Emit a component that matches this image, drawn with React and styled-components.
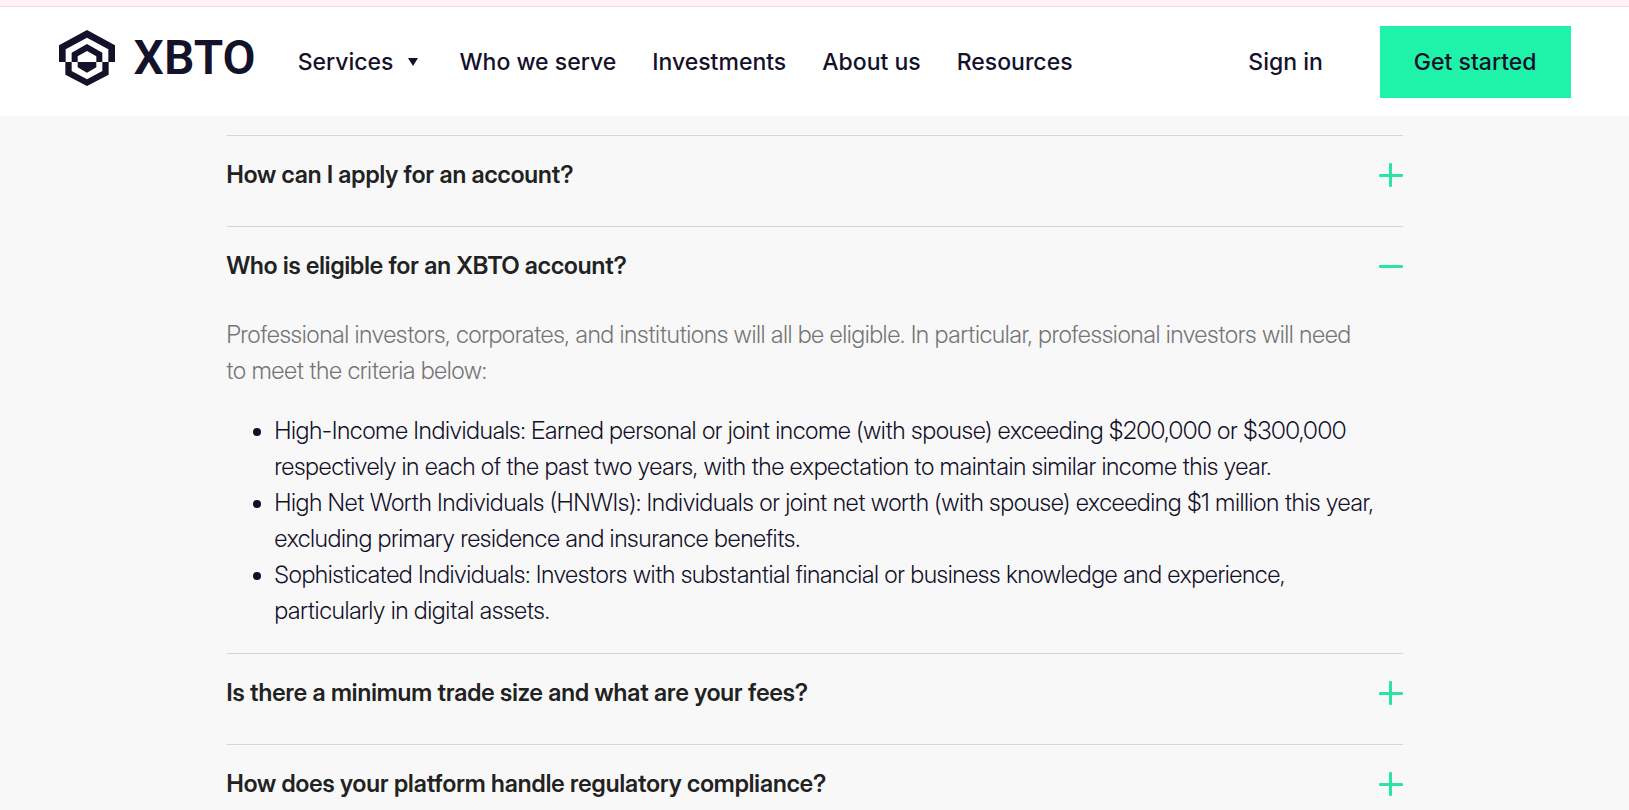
import React, { useState } from 'react';
import styled, { createGlobalStyle } from 'styled-components';

const faqs = [
    {
        id: 'apply',
        question: 'How can I apply for an account?',
    },
    {
        id: 'eligible',
        question: 'Who is eligible for an XBTO account?',
        intro: 'Professional investors, corporates, and institutions will all be eligible. In particular, professional investors will need to meet the criteria below:',
        points: [
            'High-Income Individuals: Earned personal or joint income (with spouse) exceeding $200,000 or $300,000 respectively in each of the past two years, with the expectation to maintain similar income this year.',
            'High Net Worth Individuals (HNWIs): Individuals or joint net worth (with spouse) exceeding $1 million this year, excluding primary residence and insurance benefits.',
            'Sophisticated Individuals: Investors with substantial financial or business knowledge and experience, particularly in digital assets.',
        ],
    },
    {
        id: 'fees',
        question: 'Is there a minimum trade size and what are your fees?',
    },
    {
        id: 'compliance',
        question: 'How does your platform handle regulatory compliance?',
    },
];

function Logo() {
    return (
        <LogoLink href="#home">
            <svg width="56" height="56" viewBox="0 0 168 168" fill="currentColor" aria-hidden="true">
                <path d="M0 46 84 0l84 46v50h-20V58L84 23 20 58v38H0z" />
                <path d="M38 68 84 42l46 26v28h-18V79L84 63 56 79v17H38z" />
                <path d="M19 96h19v27l46 25 46-25V96h19v38l-65 34-65-34z" />
                <path d="M56 96h56v16l-28 16-28-16z" />
            </svg>
            <LogoText>XBTO</LogoText>
        </LogoLink>
    );
}

function Header() {
    return (
        <HeaderBar>
            <HeaderInner>
                <Logo />
                <Nav>
                    <NavButton type="button">
                        Services
                        <svg width="10" height="8" viewBox="0 0 10 8" fill="currentColor" aria-hidden="true">
                            <path d="M0 0h10L5 8z" />
                        </svg>
                    </NavButton>
                    <NavLink href="#who-we-serve">Who we serve</NavLink>
                    <NavLink href="#investments">Investments</NavLink>
                    <NavLink href="#about">About us</NavLink>
                    <NavLink href="#resources">Resources</NavLink>
                </Nav>
                <Actions>
                    <NavLink href="#signin">Sign in</NavLink>
                    <CtaButton type="button">Get started</CtaButton>
                </Actions>
            </HeaderInner>
        </HeaderBar>
    );
}

function FaqItem({ item, open, onToggle }) {
    return (
        <Item>
            <Question>
                <QuestionButton
                    type="button"
                    aria-expanded={open}
                    onClick={onToggle}
                >
                    {item.question}
                    <svg width="24" height="24" viewBox="0 0 24 24" fill="currentColor" aria-hidden="true">
                        <rect x="0" y="11" width="24" height="3" rx="1" />
                        {!open && <rect x="10" y="0" width="3" height="24" rx="1" />}
                    </svg>
                </QuestionButton>
            </Question>
            {open && item.intro && (
                <Answer>
                    <Intro>{item.intro}</Intro>
                    <Points>
                        {item.points.map((point) => (
                            <li key={point}>{point}</li>
                        ))}
                    </Points>
                </Answer>
            )}
        </Item>
    );
}

export default function App() {
    const [openId, setOpenId] = useState('eligible');

    return (
        <>
            <GlobalStyle />
            <TopStrip />
            <Header />
            <Main>
                {faqs.map((item) => (
                    <FaqItem
                        key={item.id}
                        item={item}
                        open={openId === item.id}
                        onToggle={() => setOpenId(openId === item.id ? null : item.id)}
                    />
                ))}
            </Main>
        </>
    );
}

const GlobalStyle = createGlobalStyle`
    *, *::before, *::after {
        box-sizing: border-box;
    }

    body {
        margin: 0;
        background: #f8f8f8;
        color: #14112a;
        font-family: "Inter Display", Inter, "Liberation Sans", sans-serif;
        font-size: 24px;
        line-height: 36px;
    }

    button {
        border: 0;
        padding: 0;
        background: none;
        color: inherit;
        font: inherit;
        cursor: pointer;
    }
`;

const TopStrip = styled.div`
    height: 7px;
    background: #fff3f6;
    border-bottom: 1px solid #e9dfe3;
`;

const HeaderBar = styled.header`
    position: sticky;
    top: 0;
    padding: 19px 24px 18px;
    background: #fff;
    font-family: Inter, "Liberation Sans", sans-serif;
    font-size: 23px;
    font-weight: 500;
`;

const HeaderInner = styled.div`
    display: flex;
    align-items: center;
    max-width: 1512px;
    margin: 0 auto;
`;

const LogoLink = styled.a`
    display: flex;
    align-items: center;
    gap: 19px;
    margin-right: 42px;
    padding-bottom: 8px;
    color: #14112a;
    text-decoration: none;
`;

const LogoText = styled.span`
    font-family: Roboto, sans-serif;
    font-size: 48px;
    font-weight: 600;
    line-height: 56px;
`;

const Nav = styled.nav`
    display: flex;
    align-items: center;
    gap: 36px;
`;

const NavLink = styled.a`
    color: inherit;
    text-decoration: none;
    white-space: nowrap;
`;

const NavButton = styled.button`
    display: flex;
    align-items: center;
    gap: 14px;
    padding-right: 6px;
`;

const Actions = styled.div`
    display: flex;
    align-items: center;
    gap: 57px;
    margin-left: auto;
`;

const CtaButton = styled.button`
    padding: 18px 34px;
    background: #1ff3a9;
    white-space: nowrap;
`;

const Main = styled.main`
    max-width: 1176px;
    margin: 0 auto;
    padding-top: 19px;
`;

const Item = styled.section`
    border-top: 1px solid #d6d6d6;
`;

const Question = styled.h3`
    margin: 0;
    font-size: 24px;
    font-weight: 600;
    color: #222;
`;

const QuestionButton = styled.button`
    display: flex;
    align-items: center;
    justify-content: space-between;
    width: 100%;
    padding: 21px 0 33px;
    text-align: left;

    svg {
        flex: none;
        color: #2be3a4;
    }
`;

const Answer = styled.div`
    padding-bottom: 24px;
    font-weight: 300;
`;

const Intro = styled.p`
    margin: 0 0 24px;
    padding-right: 36px;
    color: #757575;
`;

const Points = styled.ul`
    margin: 0;
    padding: 0 24px 0 48px;
`;
